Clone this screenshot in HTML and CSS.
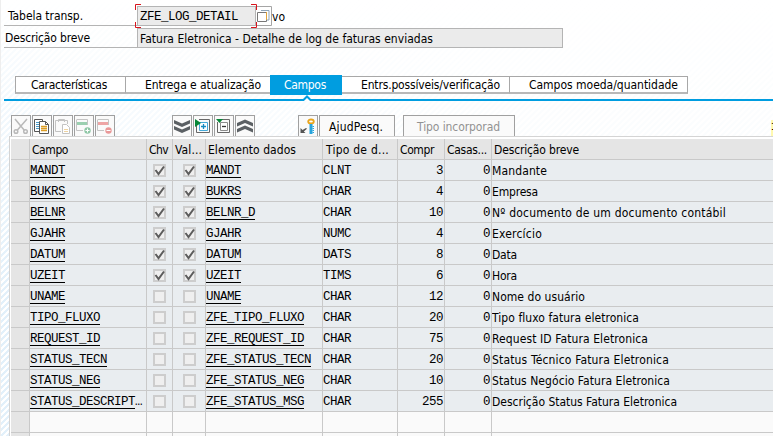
FILE: index.html
```html
<!DOCTYPE html>
<html lang="pt-BR">
<head>
<meta charset="utf-8">
<title>Tabela transparente</title>
<link rel="stylesheet" href="styles.css">
</head>
<body>
<main class="screen">
  <section class="form">
    <div class="field">
      <div class="caption first"><span data-w="75">Tabela transp.</span></div>
      <div class="value key"><span class="mono">ZFE_LOG_DETAIL</span>
        <svg class="focus" width="122" height="24" viewBox="0 0 122 24"><path d="M.5 6V.5H6M116 .5h5.500V6M.5 18v5.500H6M116 23.500h5.500V18" fill="none" stroke="#d8141c"/></svg>
      </div>
      <div class="match"><svg width="15" height="20" viewBox="0 0 15 20"><path d="M0 .5H14.500V19.500H0" fill="none" stroke="#a5a5a5"/><path d="M4 4.500h8V14H10" fill="none" stroke="#8fa5b7"/><path d="M.5 6.500h9v9h-9z" fill="#fff" stroke="#777"/><path d="M9.500 6v8" stroke="#e0a43c"/></svg></div>
      <span class="status" data-w="13">vo</span>
    </div>
    <div class="field second">
      <div class="caption"><span data-w="85">Descrição breve</span></div>
      <div class="value wide"><span data-w="293">Fatura Eletronica - Detalhe de log de faturas enviadas</span></div>
    </div>
  </section>

  <nav class="tabs">
    <div class="tab t1"><span data-w="76">Características</span></div>
    <div class="tab t2"><span data-w="116">Entrega e atualização</span></div>
    <div class="tab t3 active"><span data-w="42">Campos</span></div>
    <div class="tab t4"><span data-w="139">Entrs.possíveis/verificação</span></div>
    <div class="tab t5"><span data-w="149">Campos moeda/quantidade</span></div>
  </nav>
  <div class="rule"><svg width="12" height="6" viewBox="0 0 12 6"><path d="M1.500 6L6 1l4.500 5z" fill="#fff"/><path d="M0 5h2.500L6 1.500 9.500 5H12" fill="none" stroke="#009de0" stroke-width="2"/></svg></div>

  <div class="toolbar">
    <div class="btn"><svg width="18" height="20" viewBox="0 0 18 20"><g fill="none" stroke="#b9b9b9" stroke-width="1.500"><path d="M3 3l9.500 11.500M15 3L5 14.500"/><circle cx="4" cy="15.500" r="1.800"/><circle cx="13.500" cy="15.500" r="1.800"/></g></svg></div>
    <div class="btn"><svg width="18" height="20" viewBox="0 0 18 20"><path d="M1.500 3.500h8v12h-8z" fill="#fff" stroke="#555"/><path d="M3 6.500h4M3 8.500h4M3 10.500h4M3 12.500h4" stroke="#4b9cc9"/><path d="M6.500 5.500h6l3 3v9h-9z" fill="#fff" stroke="#555"/><path d="M12.500 5.500v3h3" fill="none" stroke="#555"/><path d="M8 10.500h6M8 12.500h6M8 14.500h6" stroke="#dc9d24" stroke-width="1.400"/></svg></div>
    <div class="btn"><svg width="18" height="20" viewBox="0 0 18 20"><path d="M7 15.500H1.500v-11h12V8M4.500 6V3.500h6V6" fill="none" stroke="#c3c3c3"/><path d="M8.500 8.500h4l3 3v6h-7z" fill="#fff" stroke="#c3c3c3"/><path d="M10 13.500h4M10 15.500h4" stroke="#efd3a0"/></svg></div>
    <div class="btn"><svg width="18" height="20" viewBox="0 0 18 20"><path d="M1 7.500h12" stroke="#9bcfb0" stroke-width="3"/><path d="M1.500 3.500v11H8M2 3.500h10.500V9" stroke="#c4c4c4" fill="none"/><circle cx="12.500" cy="14.500" r="3.200" fill="#8fc7a6"/><path d="M10.500 14.500h4M12.500 12.500v4" stroke="#fff"/></svg></div>
    <div class="btn"><svg width="18" height="20" viewBox="0 0 18 20"><path d="M1 7.500h12" stroke="#eea5a5" stroke-width="3"/><path d="M1.500 3.500v11H8M2 3.500h10.500V9" stroke="#c4c4c4" fill="none"/><circle cx="12.500" cy="14.500" r="3.200" fill="#e99898"/><path d="M10.500 14.500h4" stroke="#fff"/></svg></div>
    <div class="btn group2"><svg width="18" height="20" viewBox="0 0 18 20"><path d="M1 4v3.500l8 3.500 8-3.500V4L9 7.500zM1 10v3.500L9 17l8-3.500V10l-8 3.500z" fill="#5b6064"/></svg></div>
    <div class="btn"><svg width="18" height="20" viewBox="0 0 18 20"><path d="M5 3.500h10.500v13h-13V9" fill="none" stroke="#686868"/><path d="M5.500 6.500h8v8h-8z" fill="#fff" stroke="#45a9d8"/><path d="M7 10.500h5M9.500 8v5" stroke="#168ac0" stroke-width="1.300"/><path d="M1 3l6 4-6 4z" fill="#078637"/></svg></div>
    <div class="btn"><svg width="18" height="20" viewBox="0 0 18 20"><path d="M7 3.500h7.500v13h-12V6" fill="none" stroke="#686868"/><path d="M5.500 6.500h7v8h-7z" fill="#fff" stroke="#8c8c8c"/><path d="M7 10.500h4" stroke="#333" stroke-width="1.300"/><path d="M1 3h7L4.500 7z" fill="#078637"/></svg></div>
    <div class="btn"><svg width="18" height="20" viewBox="0 0 18 20"><path d="M1 7l8-3.500L17 7v3.500L9 7l-8 3.500zM1 13l8-3.500 8 3.500v3.500L9 13l-8 3.500z" fill="#5b6064"/></svg></div>
    <div class="btn group3"><svg width="18" height="20" viewBox="0 0 18 20"><ellipse cx="12" cy="5.500" rx="2.800" ry="2" fill="#fff" stroke="#e9a51d" stroke-width="1.800"/><path d="M12 8v10" stroke="#27a4dc" stroke-width="3"/><path d="M13.500 10.500H15M13.500 12.500H15M13.500 14.500H15M13.500 16.500H15" stroke="#27a4dc"/><path d="M1.500 12v5h5l-1.700-1.600L8 12.800 7 12l-3.500 2.100z" fill="#555"/></svg></div>
    <div class="btn text help"><span data-w="54">AjudPesq.</span></div>
    <div class="btn text builtin"><span data-w="83">Tipo incorporad</span></div>
    <span class="page">1</span>
  </div>

  <div class="table">
    <div class="grid" id="grid">
      <div class="head"></div>
      <div class="head c-name"><span data-w="36">Campo</span></div>
      <div class="head c-key"><span data-w="19">Chv</span></div>
      <div class="head c-val"><span data-w="27">Val...</span></div>
      <div class="head"><span data-w="88">Elemento dados</span></div>
      <div class="head c-type"><span data-w="63">Tipo de d...</span></div>
      <div class="head c-len"><span data-w="34">Compr</span></div>
      <div class="head c-dec"><span data-w="40">Casas...</span></div>
      <div class="head"><span data-w="85">Descrição breve</span></div>
    </div>
  </div>
</main>
<script src="table.js"></script>
</body>
</html>
```
FILE: styles.css
```css
* { box-sizing: border-box; }
body { margin: 0; }
.screen {
  width: 773px; height: 436px; overflow: hidden;
  font: 12px/16px "DejaVu Sans Condensed", "DejaVu Sans", sans-serif;
  font-stretch: condensed;
  color: #000; border-left: 1px solid #eee;
  background:
    linear-gradient(90deg, rgba(255,255,255,0) 2px, rgba(255,255,255,.3) 60px, rgba(255,255,255,.75) 500px),
    linear-gradient(180deg, #fff 0, rgba(255,255,255,.6) 100px, rgba(255,255,255,0) 300px),
    repeating-linear-gradient(135deg, #fff 0 2px, #e2f0fa 2px 4.240px);
}
span { white-space: pre; }
.mono { font: 12.500px/16px "Liberation Mono", monospace; letter-spacing: -.501px; }
.form { padding: 6px 0 0 3px; height: 75px; }
.field { display: flex; height: 20px; }
.second { margin-top: 2px; }
.caption { width: 133px; border-bottom: 1px solid #b4b4b4; padding: 2px 0 0 1px; }
.caption.first { padding-left: 4px; }
.value { position: relative; background: #ebebeb; border: 1px solid #b4b4b4; padding: 2px 0 0 2px; }
.key { width: 119px; padding-top: 1px; }
.wide { width: 426px; }
.focus { position: absolute; left: -3px; top: -3px; }
.match { width: 16px; height: 20px; padding-left: 1px; }
.match svg { display: block; }
.status { padding: 3px 0 0 0; }

.tabs { display: flex; margin-left: 14px; height: 19px; align-items: flex-end; }
.tab { height: 18px; background: #fff; border: 1px solid #a8a8a8; border-bottom: 2px solid #b8b8b8; border-left: 0; line-height: 17px; }
.t1 { width: 111px; border-left: 1px solid #a8a8a8; padding-left: 15px; }
.t2 { width: 144px; padding-left: 19px; border-right: 0; }
.t3 { width: 72px; padding-left: 14px; }
.t4 { width: 168px; padding-left: 19px; }
.t5 { width: 178px; padding-left: 19px; }
.tab.active { height: 20px; margin-bottom: -1px; background: #009de0; border: 0; color: #fff; line-height: 20px; }
.rule { position: relative; height: 2px; margin: 5px 0 0 3px; background: #009de0; }
.rule svg { position: absolute; left: 297px; top: -4px; }

.toolbar { display: flex; height: 21px; margin: 14px 0 0 10px; gap: 1px; }
.btn { width: 20px; height: 21px; flex: none; border: 1px solid #a0a0a0; border-bottom: 0; background: #fafafa; }
.btn svg { display: block; }
.group2 { margin-left: 56px; }
.group3 { margin-left: 42px; }
.text { line-height: 22px; }
.help { width: 76px; padding-left: 9px; }
.builtin { width: 112px; margin-left: 7px; padding-left: 13px; color: #929292; }
.page { margin: 5px 0 0 255px; font: 12px/14px "Liberation Mono", monospace; background: #fff9b0; }

.table { margin-left: 8px; border: 1px solid #d4d4d4; border-width: 1px 0 0 1px; padding: 2px 0 0 1px; background: #fff; }
.grid { display: grid; grid-template-columns: 19px 117px 26px 33px 117px 75px 47px 47px 1fr; grid-template-rows: 21px; grid-auto-rows: 21px; }
.head, .cell { border-right: 1px solid #c9c9c9; border-bottom: 1px solid #c9c9c9; overflow: hidden; }
.head:nth-child(9n), .cell:nth-child(9n) { border-right: 0; }
.head { background: #e5e5e5; padding: 3px 0 0 2px; white-space: nowrap; }
.c-type { padding-left: 3px; }
.cell { background: #e9edf0; white-space: nowrap; }
.cell.selector { background: #e5e5e5; }
.cell.blank { background: #fafafa; }
.cell .mono { display: inline-block; vertical-align: top; height: 18px; line-height: 23px; }
.cell .link { border-bottom: 1px solid #000; }
.cell.num { text-align: right; padding-right: 1px; }
.cell.desc { padding-top: 3px; }
.box { display: block; width: 13px; height: 13px; margin: 4px 0 0 6px; border: 2px solid #cdcdcd; background: #efefef; }
.valbox { margin-left: 10px; }
.box svg { display: block; margin: -2px; }
```
FILE: table.js
```js
const rows = [
  ["MANDT", 1, "MANDT", "CLNT", 3, "Mandante", 55],
  ["BUKRS", 1, "BUKRS", "CHAR", 4, "Empresa", 46],
  ["BELNR", 1, "BELNR_D", "CHAR", 10, "Nº documento de um documento contábil", 234],
  ["GJAHR", 1, "GJAHR", "NUMC", 4, "Exercício", 50],
  ["DATUM", 1, "DATUM", "DATS", 8, "Data", 25],
  ["UZEIT", 1, "UZEIT", "TIMS", 6, "Hora", 25],
  ["UNAME", 0, "UNAME", "CHAR", 12, "Nome do usuário", 93],
  ["TIPO_FLUXO", 0, "ZFE_TIPO_FLUXO", "CHAR", 20, "Tipo fluxo fatura eletronica", 147],
  ["REQUEST_ID", 0, "ZFE_REQUEST_ID", "CHAR", 75, "Request ID Fatura Eletronica", 156],
  ["STATUS_TECN", 0, "ZFE_STATUS_TECN", "CHAR", 20, "Status Técnico Fatura Eletronica", 177],
  ["STATUS_NEG", 0, "ZFE_STATUS_NEG", "CHAR", 10, "Status Negócio Fatura Eletronica", 178],
  ["STATUS_DESCRIPT", 0, "ZFE_STATUS_MSG", "CHAR", 255, "Descrição Status Fatura Eletronica", 185]
];
const check = '<svg width="13" height="13" viewBox="0 0 13 13"><path d="M2.500 6l3 4L11 2.500" fill="none" stroke="#5c5c5c" stroke-width="2"/></svg>';
const mono = (text, cls = "") => `<span class="mono ${cls}">${text}</span>`;
const cell = (content, cls = "") => `<div class="cell ${cls}">${content}</div>`;
const grid = document.getElementById("grid");
let html = "";
for (const [name, key, element, type, len, desc, width] of rows) {
  const mark = key ? check : "";
  html += cell("", "selector")
    + cell(mono(name, "link") + (name === "STATUS_DESCRIPT" ? mono("…") : ""))
    + cell(`<span class="box">${mark}</span>`)
    + cell(`<span class="box valbox">${mark}</span>`)
    + cell(mono(element, "link"))
    + cell(mono(type))
    + cell(mono(len), "num")
    + cell(mono(0), "num")
    + cell(`<span data-w="${width}">${desc}</span>`, "desc");
}
for (let r = 0; r < 2; r++) {
  html += cell("", "selector") + cell("", "blank").repeat(8);
}
grid.insertAdjacentHTML("beforeend", html);

for (const label of document.querySelectorAll("[data-w]")) {
  const range = document.createRange();
  range.selectNodeContents(label);
  const natural = range.getBoundingClientRect().width;
  label.style.letterSpacing = (label.dataset.w - natural) / label.textContent.length + "px";
}
```
